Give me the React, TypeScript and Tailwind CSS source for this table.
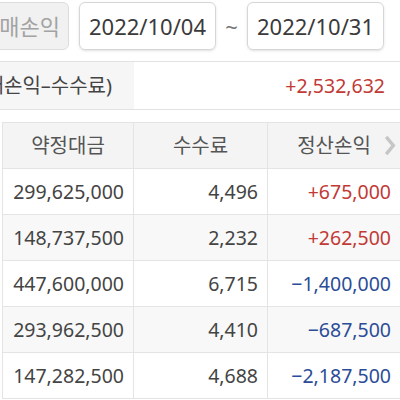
const rows = [
  { amount: "299,625,000", fee: "4,496", pnl: "+675,000" },
  { amount: "148,737,500", fee: "2,232", pnl: "+262,500" },
  { amount: "447,600,000", fee: "6,715", pnl: "−1,400,000" },
  { amount: "293,962,500", fee: "4,410", pnl: "−687,500" },
  { amount: "147,282,500", fee: "4,688", pnl: "−2,187,500" },
];

export default function App() {
  return (
    <div
      className="w-[400px] h-[400px] overflow-hidden bg-white text-[#444]"
      style={{ fontFamily: '"Noto Sans", "Noto Sans CJK KR", sans-serif' }}
    >
      {/* period selector */}
      <div className="h-[62px] flex items-start pt-[2px] border-b border-[#e2e2e2]">
        <button className="ml-[-40px] w-[109px] h-[48px] shrink-0 rounded-md border border-[#dcdcdc] bg-[#f1f1f1] text-[22px] text-[#a3a3a3] flex items-center justify-end pr-[8px] whitespace-nowrap">
          매매손익
        </button>
        <div className="ml-[10px] w-[137px] h-[48px] shrink-0 rounded-md border border-[#d6d6d6] shadow-sm flex items-center justify-center text-[22px] text-[#3a3a3a]">
          2022/10/04
        </div>
        <span className="w-[31px] h-[48px] flex items-center justify-center text-[22px] text-[#777]">~</span>
        <div className="w-[137px] h-[48px] shrink-0 rounded-md border border-[#d6d6d6] shadow-sm flex items-center justify-center text-[22px] text-[#3a3a3a]">
          2022/10/31
        </div>
      </div>

      {/* summary */}
      <div className="h-[48px] flex border-b border-[#e2e2e2]">
        <div className="w-[134px] shrink-0 bg-[#f6f6f6] flex items-center justify-end pr-[22px] overflow-hidden whitespace-nowrap text-[20px] text-[#444]">
          정산손익(매매손익–수수료)
        </div>
        <div className="flex-1 flex items-center justify-end pr-[15px] text-[19.5px] text-[#c23a36]">
          +2,532,632
        </div>
      </div>

      {/* table */}
      <div className="mt-[12px] ml-[2px] border-t border-l border-[#e4e4e4]">
        <div className="h-[46px] grid grid-cols-[131px_134px_1fr] bg-[#f4f4f4] border-b border-[#e4e4e4] text-[20px] text-[#555]">
          <div className="flex items-center justify-center border-r border-[#e4e4e4]">약정대금</div>
          <div className="flex items-center justify-center border-r border-[#e4e4e4]">수수료</div>
          <div className="relative flex items-center justify-center">
            정산손익
            <svg
              viewBox="0 0 12 22"
              className="absolute right-[4px] top-[12px] w-[12px] h-[21px]"
              fill="none"
              stroke="#c6c6c6"
              strokeWidth="3.6"
            >
              <path d="M2 2l7.5 9L2 20" />
            </svg>
          </div>
        </div>
        {rows.map((r, i) => (
          <div
            key={r.amount}
            className={`h-[46px] grid grid-cols-[131px_134px_1fr] border-b border-[#e4e4e4] text-[19.5px] ${
              i % 2 === 1 ? "bg-[#f8f8f8]" : "bg-white"
            }`}
          >
            <div className="flex items-center justify-end pr-[9px] border-r border-[#e4e4e4]">{r.amount}</div>
            <div className="flex items-center justify-end pr-[9px] border-r border-[#e4e4e4]">{r.fee}</div>
            <div
              className={`flex items-center justify-end pr-[9px] ${
                r.pnl.startsWith("+") ? "text-[#c23a36]" : "text-[#2b4c96]"
              }`}
            >
              {r.pnl}
            </div>
          </div>
        ))}
      </div>
    </div>
  );
}
